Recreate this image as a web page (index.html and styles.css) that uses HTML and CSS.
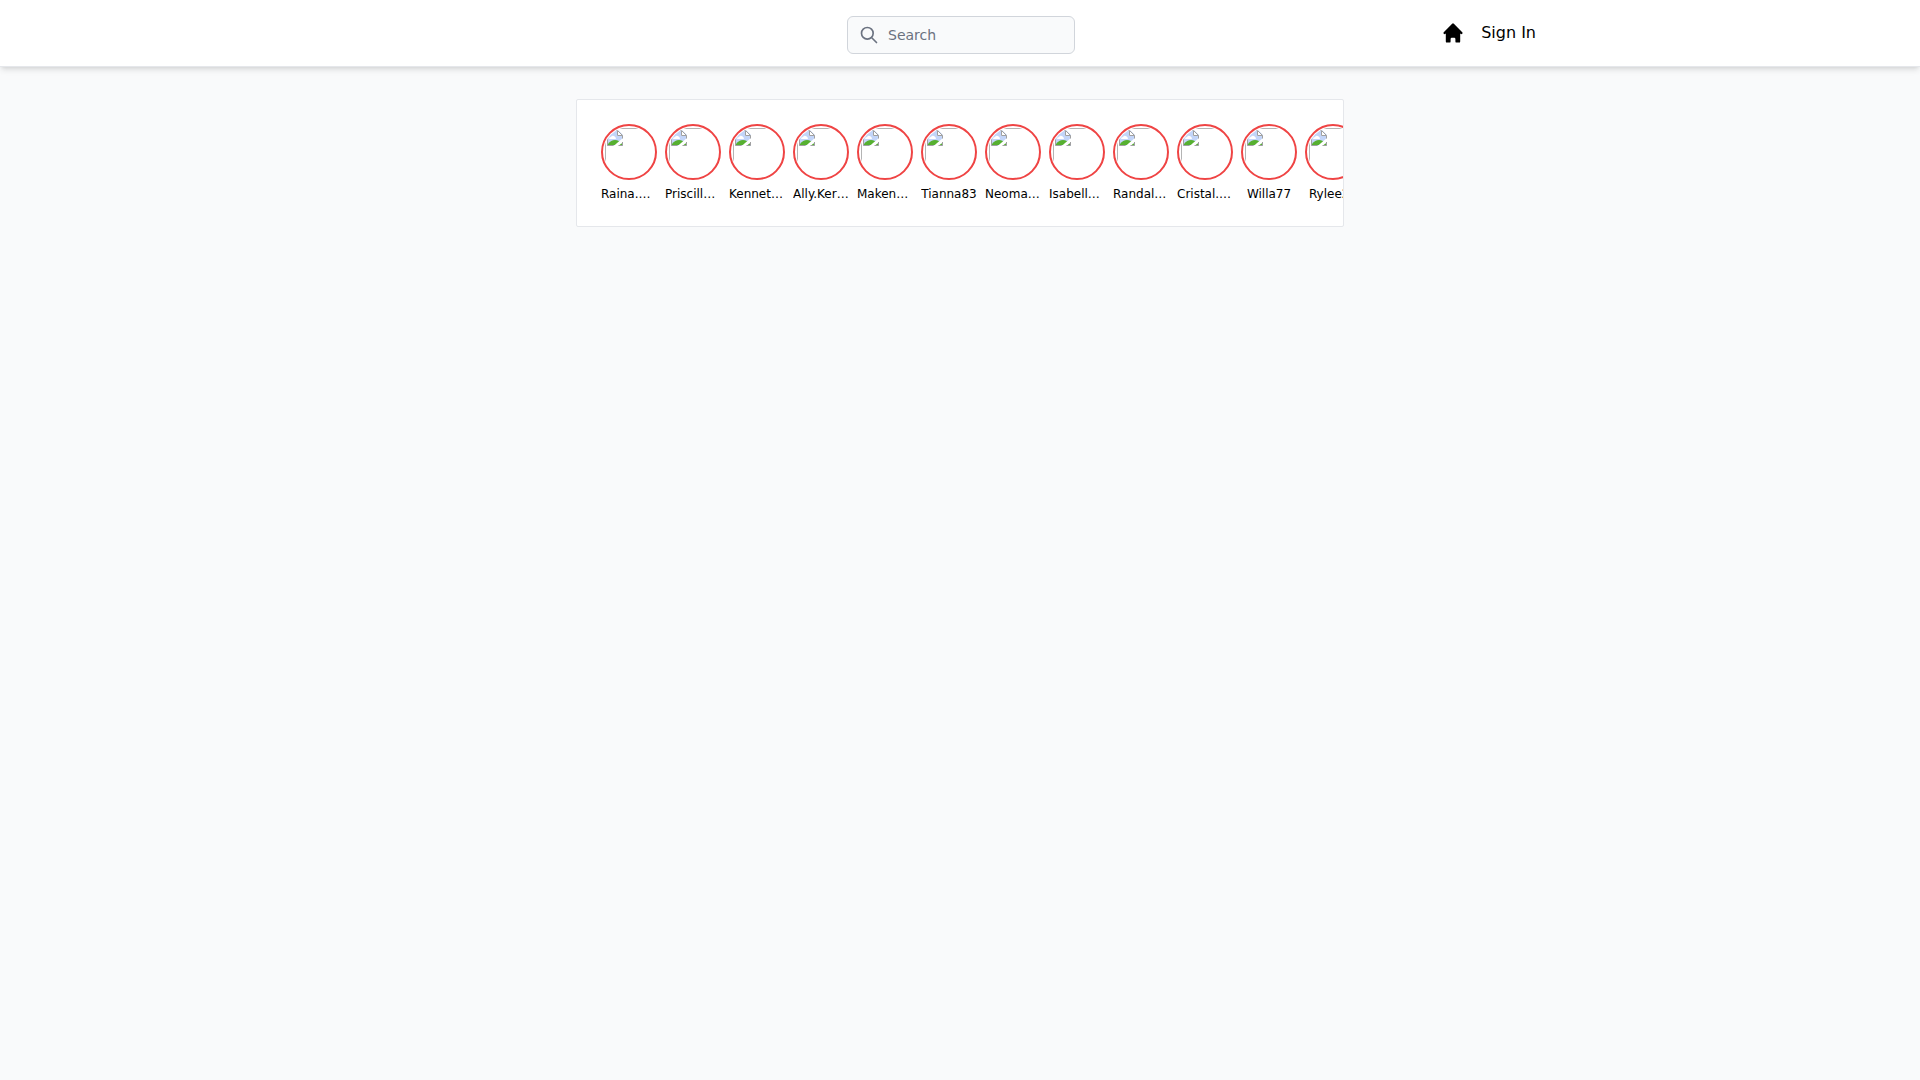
FILE: index.html
```
<!DOCTYPE html>
<html lang="en">
  <head>
    <meta charset="UTF-8" />
    <meta name="viewport" content="width=device-width, initial-scale=1.0" />
    <title>Feed</title>
    <link rel="stylesheet" href="styles.css" />
  </head>
  <body>
    <header class="header">
      <div class="header-inner">
        <div class="logo"></div>
        <div class="search">
          <svg class="search-icon" viewBox="0 0 24 24" fill="none" stroke="currentColor" stroke-width="2" stroke-linecap="round" stroke-linejoin="round" aria-hidden="true">
            <path d="M21 21l-6-6m2-5a7 7 0 11-14 0 7 7 0 0114 0z" />
          </svg>
          <input class="search-input" type="text" placeholder="Search" aria-label="Search" />
        </div>
        <nav class="nav">
          <a class="nav-link" href="#" aria-label="Home">
            <svg class="home-icon" viewBox="0 0 20 20" fill="currentColor" aria-hidden="true">
              <path d="M10.707 2.293a1 1 0 00-1.414 0l-7 7a1 1 0 001.414 1.414L4 10.414V17a1 1 0 001 1h2a1 1 0 001-1v-2a1 1 0 011-1h2a1 1 0 011 1v2a1 1 0 001 1h2a1 1 0 001-1v-6.586l.293.293a1 1 0 001.414-1.414l-7-7z" />
            </svg>
          </a>
          <button class="sign-in" type="button">Sign In</button>
        </nav>
      </div>
    </header>

    <main class="feed">
      <section class="stories" id="stories"></section>
    </main>

    <template id="story-template">
      <div class="story">
        <svg class="avatar" viewBox="-1 -1 50 50" aria-hidden="true">
          <path d="M.5 48V.5H48" fill="none" stroke="#b4b4b4" />
          <path d="M2 2h11l5 5v11H2z" fill="#c3d5f9" />
          <path d="M4 11q0-2 2-2q1-2 3-1q2 1 2 3z" fill="#fff" />
          <path d="M3 17v-1q3-4 7-4q4 0 7 4v1z" fill="#56b030" />
          <path d="M8 18.500L18.500 9.500v4L13 18.500z" fill="#fff" />
          <path d="M12 2v6h6z" fill="#fff" />
          <path d="M2.500 17.500v-15h10l5 5v3M2.500 17.500h6M13.500 17.500h4v-3.500M12.500 3v4.500h5" fill="none" stroke="#a0a0a0" />
        </svg>
        <p class="username"></p>
      </div>
    </template>

    <script>
      const users = [
        "Raina.Moen",
        "Priscilla.Rath",
        "Kenneth_Kub",
        "Ally.Kertzmann",
        "Makenna_Rau",
        "Tianna83",
        "Neoma.Hills",
        "Isabella_Von",
        "Randal.Hahn",
        "Cristal.Koss",
        "Willa77",
        "Rylee27",
      ];

      const stories = document.getElementById("stories");
      const template = document.getElementById("story-template");

      users.forEach((user) => {
        const story = template.content.cloneNode(true);
        story.querySelector(".username").textContent = user;
        stories.appendChild(story);
      });
    </script>
  </body>
</html>
```

FILE: styles.css
```
:root {
  --page-bg: #f9fafb;
  --border-light: #e5e7eb;
  --border-input: #d1d5db;
  --muted: #6b7280;
  --ring: #ef4444;
}

* {
  box-sizing: border-box;
}

body {
  margin: 0;
  min-height: 100vh;
  background-color: var(--page-bg);
  color: #000;
  font-family: "DejaVu Sans", sans-serif;
  font-size: 16px;
  line-height: 24px;
}

.header {
  position: sticky;
  top: 0;
  z-index: 10;
  background-color: #fff;
  border-bottom: 1px solid var(--border-light);
  box-shadow: 0 4px 6px -1px rgba(0, 0, 0, 0.1), 0 2px 4px -2px rgba(0, 0, 0, 0.1);
}

.header-inner {
  display: grid;
  grid-template-columns: 1fr auto 1fr;
  align-items: center;
  max-width: 1152px;
  margin: 0 auto;
}

.search {
  position: relative;
  padding: 16px 10px 12px 12px;
}

.search-icon {
  position: absolute;
  left: 24px;
  top: 25px;
  width: 20px;
  height: 20px;
  color: var(--muted);
}

.search-input {
  display: block;
  width: 228px;
  height: 38px;
  padding: 8px 12px 8px 40px;
  border: 1px solid var(--border-input);
  border-radius: 6px;
  background-color: var(--page-bg);
  font-family: inherit;
  font-size: 14px;
  line-height: 20px;
}

.search-input::placeholder {
  color: var(--muted);
}

.nav {
  display: flex;
  align-items: center;
  justify-content: flex-end;
  gap: 16px;
}

.nav-link {
  display: flex;
  color: inherit;
}

.home-icon {
  width: 24px;
  height: 24px;
}

.sign-in {
  padding: 0;
  border: 0;
  background: none;
  color: inherit;
  font: inherit;
  cursor: pointer;
}

.feed {
  max-width: 768px;
  margin: 32px auto 0;
}

.stories {
  display: flex;
  gap: 8px;
  padding: 24px;
  overflow: hidden;
  background-color: #fff;
  border: 1px solid var(--border-light);
  border-radius: 2px;
}

.story {
  flex: none;
  width: 56px;
}

.avatar {
  display: block;
  width: 56px;
  height: 56px;
  padding: 1px;
  border: 2px solid var(--ring);
  border-radius: 50%;
  overflow: hidden;
}

.username {
  margin: 6px 0 0;
  overflow: hidden;
  font-size: 12px;
  line-height: 16px;
  text-align: center;
  text-overflow: ellipsis;
  white-space: nowrap;
}
```
